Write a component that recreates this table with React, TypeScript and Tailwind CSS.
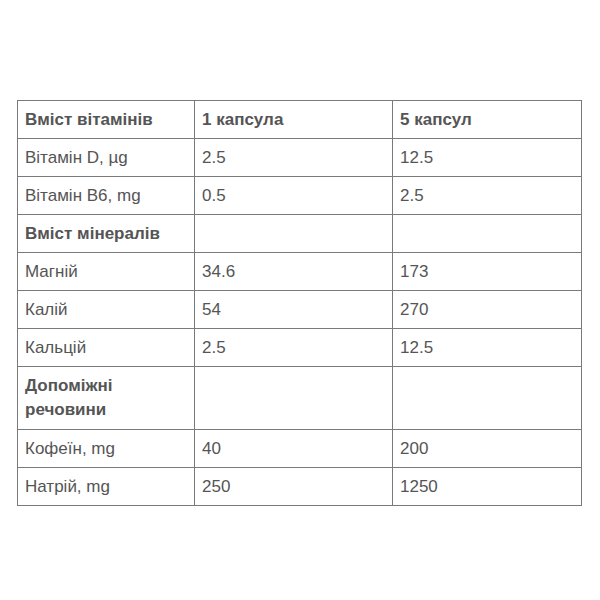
const rows: { cells: string[]; bold?: boolean; tall?: boolean }[] = [
  { cells: ["Вміст вітамінів", "1 капсула", "5 капсул"], bold: true },
  { cells: ["Вітамін D, µg", "2.5", "12.5"] },
  { cells: ["Вітамін B6, mg", "0.5", "2.5"] },
  { cells: ["Вміст мінералів", "", ""], bold: true },
  { cells: ["Магній", "34.6", "173"] },
  { cells: ["Калій", "54", "270"] },
  { cells: ["Кальцій", "2.5", "12.5"] },
  { cells: ["Допоміжні речовини", "", ""], bold: true, tall: true },
  { cells: ["Кофеїн, mg", "40", "200"] },
  { cells: ["Натрій, mg", "250", "1250"] },
]

export default function App() {
  return (
    <div className="w-[600px] h-[600px] bg-white pt-[100px] pl-[17px] font-['Liberation_Sans',Arial,sans-serif] text-[17px] text-[#555]">
      <table className="w-[564px] border-collapse border border-[#7a7a7a] table-fixed">
        <colgroup>
          <col className="w-[177px]" />
          <col className="w-[198px]" />
          <col className="w-[189px]" />
        </colgroup>
        <tbody>
          {rows.map((row, i) => (
            <tr key={i}>
              {row.cells.map((c, j) => (
                <td
                  key={j}
                  className={`border border-[#7a7a7a] px-[7px] pt-[7px] leading-[24px] align-top ${row.tall ? "pb-[7px]" : "pb-[6px]"} ${row.bold ? "font-bold" : ""}`}
                >
                  {c}
                </td>
              ))}
            </tr>
          ))}
        </tbody>
      </table>
    </div>
  )
}
